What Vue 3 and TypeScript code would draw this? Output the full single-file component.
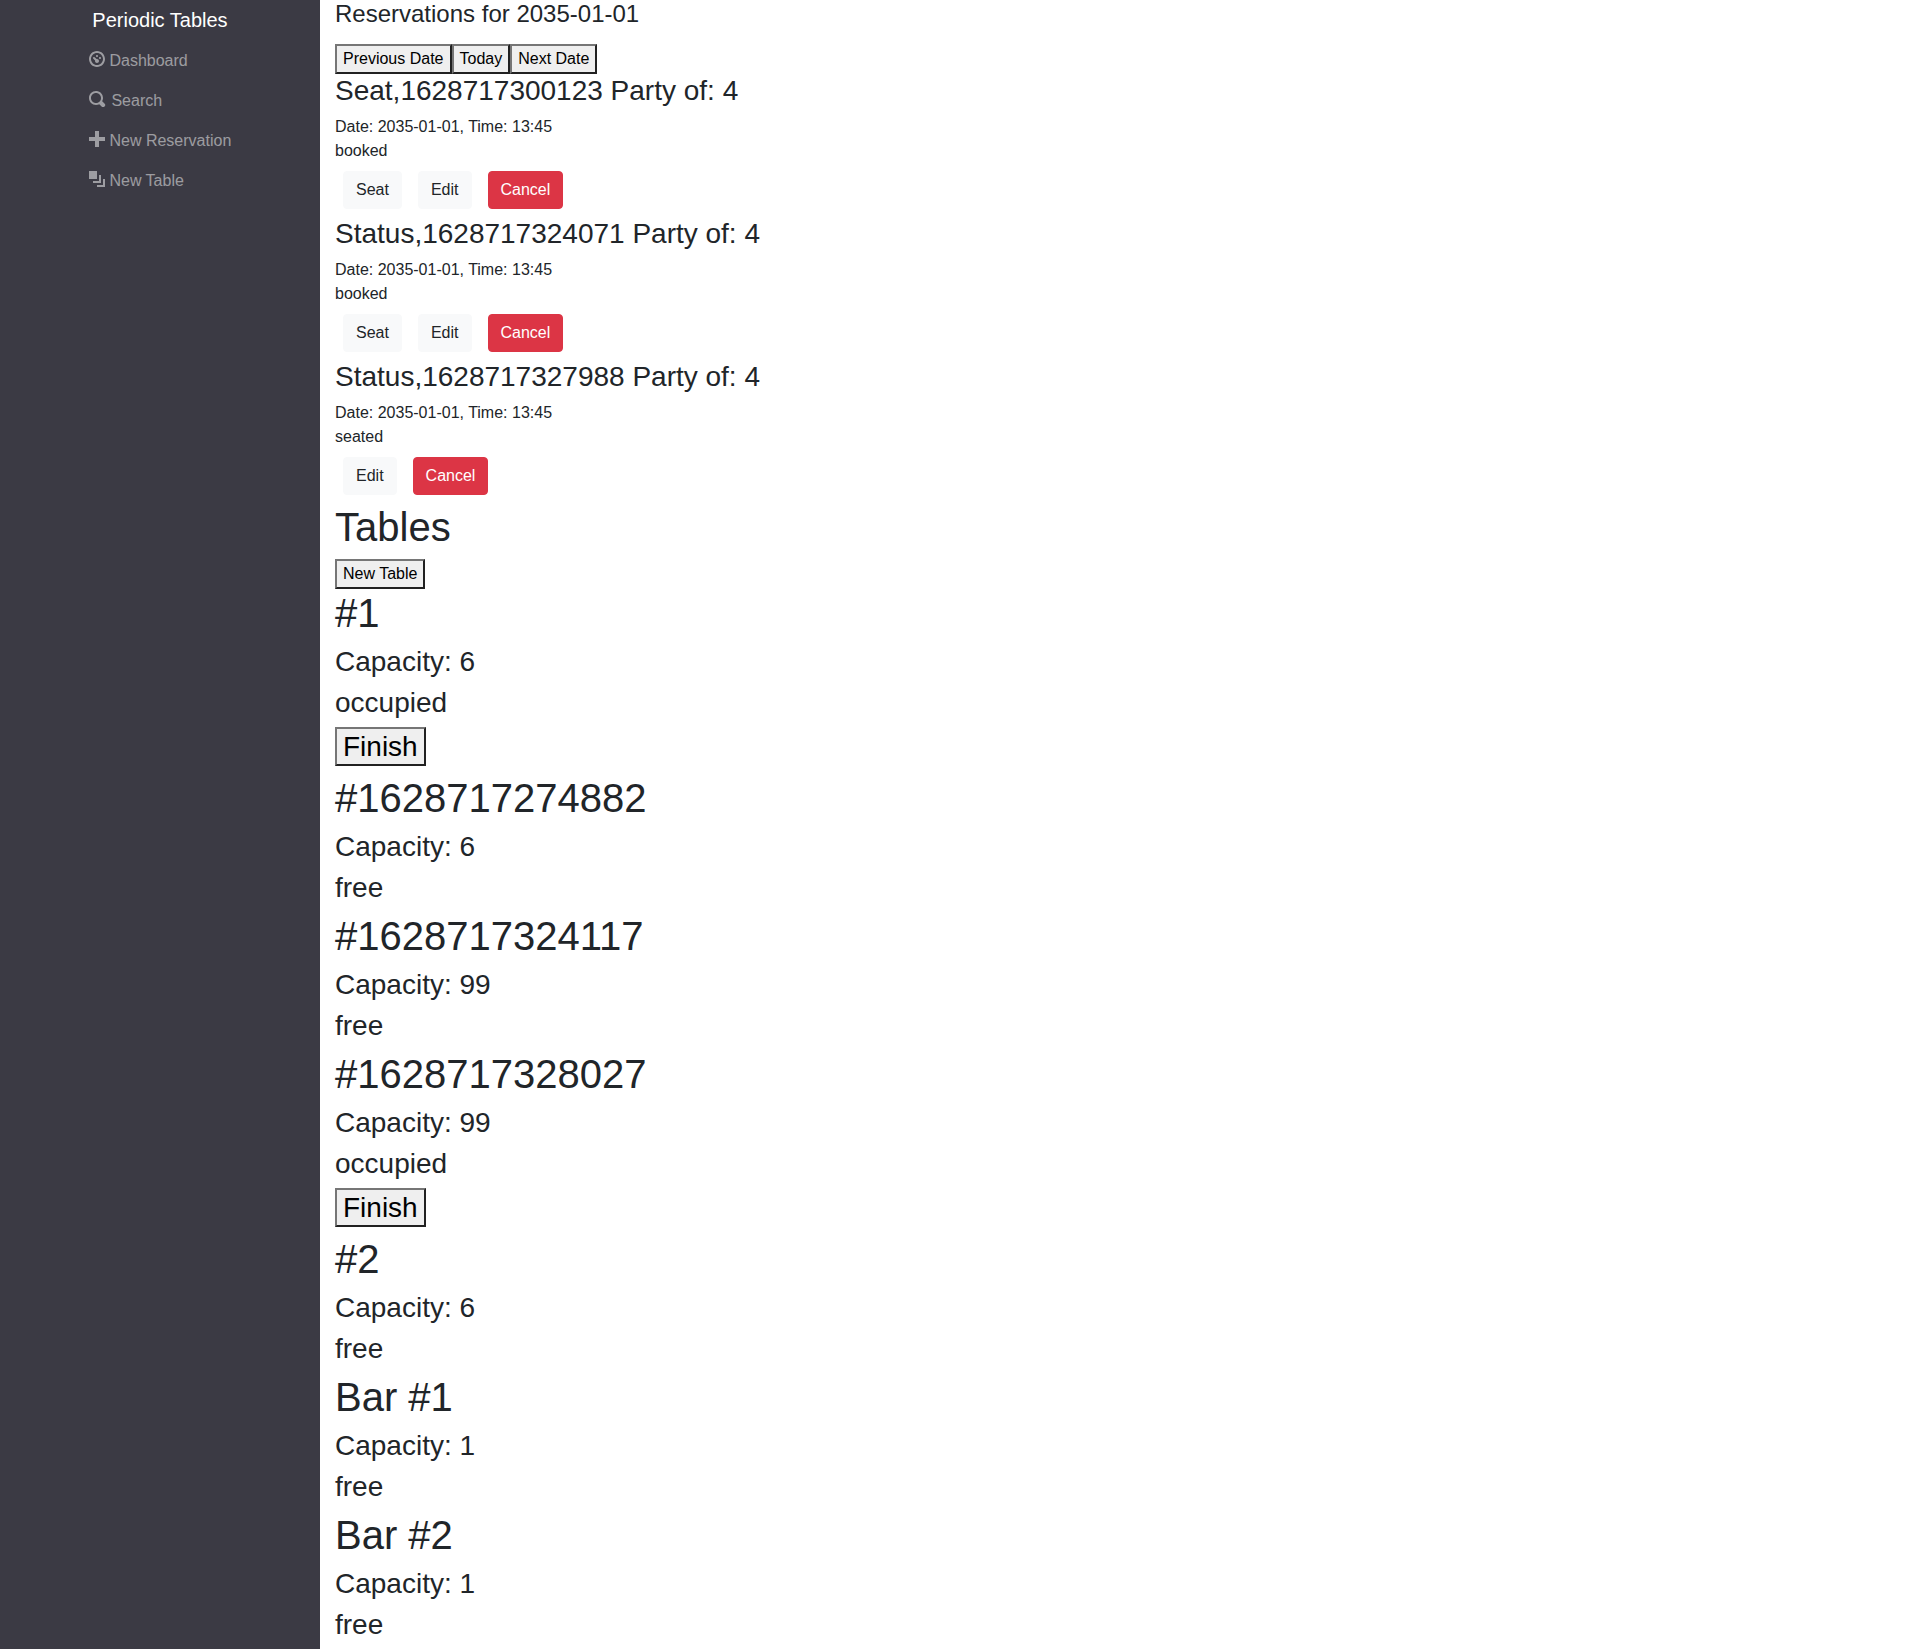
<script setup lang="ts">
interface NavItem {
  label: string
  icon: string
  iconWidth: number
  href: string
}

interface Reservation {
  id: number
  name: string
  people: number
  date: string
  time: string
  status: 'booked' | 'seated'
}

interface DiningTable {
  id: number
  name: string
  capacity: number
  status: 'free' | 'occupied'
}

const date = '2035-01-01'

const navItems: NavItem[] = [
  {
    label: 'Dashboard',
    href: '#dashboard',
    iconWidth: 16,
    icon: 'M4 0c-2.2 0-4 1.8-4 4s1.8 4 4 4 4-1.8 4-4-1.8-4-4-4zm0 1c1.66 0 3 1.34 3 3s-1.34 3-3 3-3-1.34-3-3 1.34-3 3-3zm0 1c-.28 0-.5.22-.5.5s.22.5.5.5.5-.22.5-.5-.22-.5-.5-.5zm-1.66 1a.5.5 0 0 0-.19.84l.91.91c-.02.08-.06.16-.06.25 0 .55.45 1 1 1s1-.45 1-1-.45-1-1-1c-.09 0-.17.04-.25.06l-.91-.91a.5.5 0 0 0-.44-.16.5.5 0 0 0-.06 0zm3.16 0c-.28 0-.5.22-.5.5s.22.5.5.5.5-.22.5-.5-.22-.5-.5-.5z',
  },
  {
    label: 'Search',
    href: '#search',
    iconWidth: 18,
    icon: 'M3.5 0c-1.93 0-3.5 1.57-3.5 3.5s1.57 3.5 3.5 3.5c.59 0 1.17-.14 1.66-.41a1 1 0 0 0 .13.13l1 1a1.02 1.02 0 1 0 1.44-1.44l-1-1a1 1 0 0 0-.16-.13c.27-.49.44-1.06.44-1.66 0-1.93-1.55-3.5-3.5-3.5zm0 1c1.39 0 2.5 1.11 2.5 2.5 0 .66-.24 1.27-.66 1.72l-.03.03a1 1 0 0 0-.13.13c-.44.4-1.04.63-1.69.63-1.39 0-2.5-1.11-2.5-2.5s1.11-2.5 2.5-2.5z',
  },
  {
    label: 'New Reservation',
    href: '#reservations-new',
    iconWidth: 16,
    icon: 'M3 0v3h-3v2h3v3h2v-3h3v-2h-3v-3h-2z',
  },
  {
    label: 'New Table',
    href: '#tables-new',
    iconWidth: 16,
    icon: 'M0 0v4h4v-4h-4zm5 2v3h-3v1h4v-4h-1zm2 2v3h-3v1h4v-4h-1z',
  },
]

const reservations: Reservation[] = [
  { id: 1, name: 'Seat,1628717300123', people: 4, date, time: '13:45', status: 'booked' },
  { id: 2, name: 'Status,1628717324071', people: 4, date, time: '13:45', status: 'booked' },
  { id: 3, name: 'Status,1628717327988', people: 4, date, time: '13:45', status: 'seated' },
]

const tables: DiningTable[] = [
  { id: 1, name: '#1', capacity: 6, status: 'occupied' },
  { id: 2, name: '#1628717274882', capacity: 6, status: 'free' },
  { id: 3, name: '#1628717324117', capacity: 99, status: 'free' },
  { id: 4, name: '#1628717328027', capacity: 99, status: 'occupied' },
  { id: 5, name: '#2', capacity: 6, status: 'free' },
  { id: 6, name: 'Bar #1', capacity: 1, status: 'free' },
  { id: 7, name: 'Bar #2', capacity: 1, status: 'free' },
]
</script>

<template>
  <div class="layout">
    <aside class="sidebar">
      <a class="brand" href="#dashboard">Periodic Tables</a>
      <nav class="nav">
        <a v-for="item in navItems" :key="item.label" class="nav-link" :href="item.href">
          <svg
            class="icon"
            :width="item.iconWidth"
            height="16"
            :viewBox="`0 0 ${item.iconWidth / 2} 8`"
            aria-hidden="true"
          >
            <path :d="item.icon" /></svg>&nbsp;{{ item.label }}
        </a>
      </nav>
    </aside>

    <main class="content">
      <h4 class="date-title">Reservations for {{ date }}</h4>
      <div class="date-buttons">
        <button type="button" class="plain">Previous Date</button>
        <button type="button" class="plain">Today</button>
        <button type="button" class="plain">Next Date</button>
      </div>

      <section v-for="r in reservations" :key="r.id">
        <h3>{{ r.name }} Party of: {{ r.people }}</h3>
        <div>Date: {{ r.date }}, Time: {{ r.time }}</div>
        <div>{{ r.status }}</div>
        <div class="actions">
          <a v-if="r.status === 'booked'" class="btn light" :href="`#reservations-${r.id}-seat`">Seat</a>
          <a class="btn light" :href="`#reservations-${r.id}-edit`">Edit</a>
          <button type="button" class="btn danger">Cancel</button>
        </div>
      </section>

      <h1>Tables</h1>
      <button type="button" class="plain">New Table</button>

      <section v-for="t in tables" :key="t.id">
        <h1>{{ t.name }}</h1>
        <h3>Capacity: {{ t.capacity }}</h3>
        <h3>{{ t.status }}</h3>
        <h3 v-if="t.status === 'occupied'">
          <button type="button" class="plain">Finish</button>
        </h3>
      </section>
    </main>
  </div>
</template>

<style>
body {
  margin: 0;
  background: #fff;
}
</style>

<style scoped>
.layout {
  display: grid;
  grid-template-columns: 2fr 10fr;
  min-height: 100vh;
  color: #212529;
  font-family: "Liberation Sans", Arial, sans-serif;
  font-size: 16px;
  line-height: 24px;
}

.sidebar {
  display: flex;
  flex-direction: column;
  align-items: center;
  gap: 1px;
  background: #3b3a44;
}

.brand {
  padding: 5px 0;
  color: #fff;
  font-size: 20px;
  line-height: 30px;
  text-decoration: none;
}

.nav {
  display: flex;
  flex-direction: column;
  width: 142px;
}

.nav-link {
  padding: 8px 0;
  color: rgba(255, 255, 255, 0.5);
  text-decoration: none;
  white-space: nowrap;
}

.icon {
  fill: currentColor;
  vertical-align: -1px;
}

.content {
  padding: 0 15px;
}

h1,
h3,
h4 {
  margin: 0 0 8px;
  font-weight: 500;
}

h1 {
  font-size: 40px;
  line-height: 48px;
}

h3 {
  font-size: 28px;
  line-height: 33px;
}

h4 {
  font-size: 24px;
  line-height: 28px;
}

.date-title {
  margin-bottom: 16px;
}

.date-buttons {
  display: flex;
}

button {
  margin: 0;
  border-radius: 0;
  font: inherit;
}

.plain {
  display: block;
  padding: 1px 6px;
  border: 2px solid;
  border-color: #767676 #212121 #212121 #767676;
  background: #efefef;
  color: #000;
}

.actions {
  display: flex;
  gap: 16px;
  padding: 8px;
}

.btn {
  padding: 6px 12px;
  border: 1px solid transparent;
  border-radius: 4px;
  text-decoration: none;
}

.light {
  border-color: #f8f9fa;
  background: #f8f9fa;
  color: #212529;
}

.danger {
  border-color: #dc3545;
  background: #dc3545;
  color: #fff;
}
</style>
